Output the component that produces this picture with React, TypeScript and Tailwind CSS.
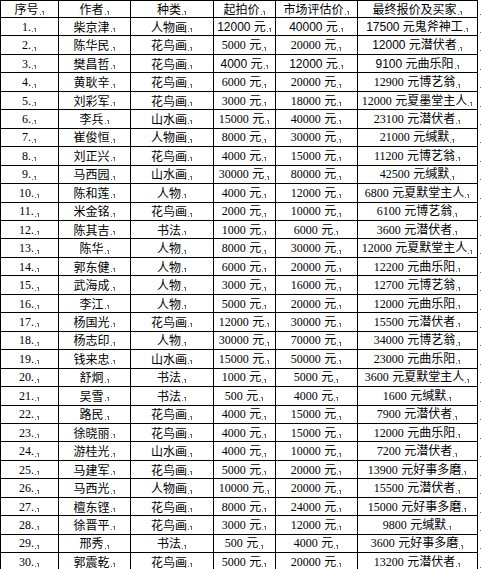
const header = ['序号', '作者', '种类', '起拍价', '市场评估价', '最终报价及买家'];

const rows: string[][] = [
  ['1.', '柴京津', '人物画', '12000 元', '40000 元', '17500 元鬼斧神工'],
  ['2.', '陈华民', '花鸟画', '5000 元', '20000 元', '12000 元潜伏者'],
  ['3.', '樊昌哲', '花鸟画', '4000 元', '12000 元', '9100 元曲乐阳'],
  ['4.', '黄耿辛', '花鸟画', '6000 元', '20000 元', '12900 元博艺翁'],
  ['5.', '刘彩军', '花鸟画', '3000 元', '18000 元', '12000 元夏墨堂主人'],
  ['6.', '李兵', '山水画', '15000 元', '40000 元', '23100 元潜伏者'],
  ['7.', '崔俊恒', '人物画', '8000 元', '30000 元', '21000 元缄默'],
  ['8.', '刘正兴', '花鸟画', '4000 元', '15000 元', '11200 元博艺翁'],
  ['9.', '马西园', '山水画', '30000 元', '80000 元', '42500 元缄默'],
  ['10.', '陈和莲', '人物', '4000 元', '12000 元', '6800 元夏默堂主人'],
  ['11.', '米金铭', '花鸟画', '2000 元', '10000 元', '6100 元博艺翁'],
  ['12.', '陈其吉', '书法', '1000 元', '6000 元', '3600 元潜伏者'],
  ['13.', '陈华', '人物', '8000 元', '30000 元', '12000 元夏默堂主人'],
  ['14.', '郭东健', '人物', '6000 元', '20000 元', '12200 元曲乐阳'],
  ['15.', '武海成', '人物', '3000 元', '16000 元', '12700 元博艺翁'],
  ['16.', '李江', '人物', '5000 元', '20000 元', '12000 元曲乐阳'],
  ['17.', '杨国光', '花鸟画', '12000 元', '30000 元', '15500 元潜伏者'],
  ['18.', '杨志印', '人物', '30000 元', '70000 元', '34000 元博艺翁'],
  ['19.', '钱来忠', '山水画', '15000 元', '50000 元', '23000 元曲乐阳'],
  ['20.', '舒炯', '书法', '1000 元', '5000 元', '3600 元夏默堂主人'],
  ['21.', '吴雪', '书法', '500 元', '4000 元', '1600 元缄默'],
  ['22.', '路民', '花鸟画', '4000 元', '15000 元', '7900 元潜伏者'],
  ['23.', '徐晓丽', '花鸟画', '4000 元', '15000 元', '12000 元曲乐阳'],
  ['24.', '游桂光', '山水画', '4000 元', '10000 元', '7200 元潜伏者'],
  ['25.', '马建军', '花鸟画', '5000 元', '20000 元', '13900 元好事多磨'],
  ['26.', '马西光', '人物画', '10000 元', '20000 元', '15500 元潜伏者'],
  ['27.', '檀东铿', '花鸟画', '8000 元', '24000 元', '15000 元好事多磨'],
  ['28.', '徐晋平', '花鸟画', '3000 元', '12000 元', '9800 元缄默'],
  ['29.', '邢秀', '书法', '500 元', '4000 元', '3600 元好事多磨'],
  ['30.', '郭震乾', '花鸟画', '5000 元', '20000 元', '13200 元潜伏者'],
];

// cells whose digits are set in a sans face in the original document
const sansCells = new Set(['0-3', '0-4', '0-5', '1-5', '2-3', '2-4', '2-5']);

function Mark() {
  return (
    <svg width="5" height="6" viewBox="0 0 5 6" className="inline-block ml-[1px] mt-[5px] shrink-0">
      <rect x="0" y="5" width="1" height="1" fill="#666" />
      <rect x="3" y="2" width="1" height="4" fill="#666" />
      <rect x="2" y="2" width="1" height="1" fill="#666" />
    </svg>
  );
}

function Cell({ text, sans }: { text: string; sans: boolean }) {
  const m = text.match(/^([0-9.]+)(.*)$/);
  if (!m) {
    return (
      <>
        <span className="font-['Noto_Sans_CJK_SC',sans-serif]">{text}</span>
        <Mark />
      </>
    );
  }
  return (
    <>
      <span
        className={
          sans
            ? "font-['Liberation_Sans',sans-serif]"
            : "font-['Liberation_Serif',serif]"
        }
      >
        {m[1]}
      </span>
      <span className="whitespace-pre font-['Liberation_Sans','Noto_Sans_CJK_SC',sans-serif]">{m[2]}</span>
      <Mark />
    </>
  );
}

export default function App() {
  return (
    <div className="w-[481px] h-[569px] overflow-hidden bg-white text-black text-[12px] leading-[12px]">
      <div className="grid grid-cols-[59px_72px_83px_62px_82px_120px_3px] grid-rows-[18px_repeat(30,18.46px)]">
        {header.map((h, i) => (
          <div
            key={h}
            className={`flex items-center justify-center whitespace-nowrap border-t border-r border-b border-black ${i === 0 ? 'border-l' : ''}`}
          >
            <Cell text={h} sans={false} />
          </div>
        ))}
        <div className="flex items-center pl-[1px]">
          <Mark />
        </div>
        {rows.map((r, ri) =>
          [
            ...r.map((c, ci) => (
              <div
                key={`${ri}-${ci}`}
                className={`flex items-center justify-center whitespace-nowrap border-r border-b border-black ${ci === 0 ? 'border-l' : ''}`}
              >
                <Cell text={c} sans={sansCells.has(`${ri}-${ci}`)} />
              </div>
            )),
            <div key={`${ri}-end`} className="flex items-center pl-[1px]">
              <Mark />
            </div>,
          ]
        )}
      </div>
    </div>
  );
}
